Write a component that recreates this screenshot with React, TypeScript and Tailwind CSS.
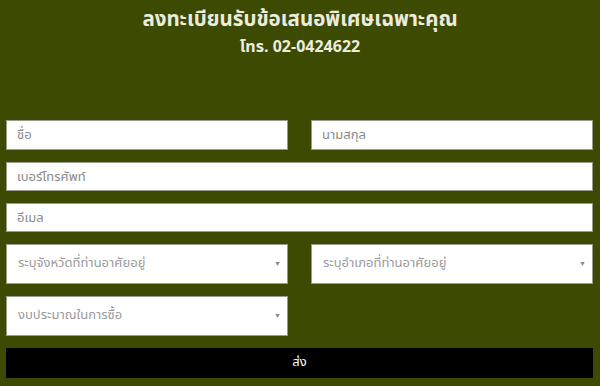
const font = { fontFamily: '"Noto Sans Thai", "Noto Sans", "Liberation Sans", sans-serif' };

function Field({ placeholder, tall }: { placeholder: string; tall?: boolean }) {
  return (
    <input
      placeholder={placeholder}
      className={
        (tall ? "h-[30px] " : "h-[29px] ") +
        "w-full border border-[#9a9a8c] bg-white px-[10px] text-[13px] text-[#333] outline-none placeholder:text-[#8a8a8a]"
      }
    />
  );
}

function Select({ label }: { label: string }) {
  return (
    <div className="flex h-[40px] w-full items-center justify-between border border-[#9a9a8c] bg-white pl-[11px] pr-[6px]">
      <span className="text-[13px] text-[#9a9a9a]">{label}</span>
      <span className="text-[7px] text-[#888]">▼</span>
    </div>
  );
}

export default function App() {
  return (
    <main className="h-[386px] w-[600px] bg-[#3d4a02]" style={font}>
      <div className="pt-[7px] text-center text-[#ecebdf]">
        <h1 className="text-[20.5px] font-bold leading-[26px]">ลงทะเบียนรับข้อเสนอพิเศษเฉพาะคุณ</h1>
        <p className="mt-[4px] text-[16px] font-bold leading-[20px]">โทร. 02-0424622</p>
      </div>

      <form className="mt-[63px] flex flex-col gap-[12px] pl-[6px] pr-[7px]">
        <div className="grid grid-cols-2 gap-[23px]">
          <Field placeholder="ชื่อ" tall />
          <Field placeholder="นามสกุล" tall />
        </div>
        <Field placeholder="เบอร์โทรศัพท์" />
        <Field placeholder="อีเมล" />
        <div className="grid grid-cols-2 gap-[23px]">
          <Select label="ระบุจังหวัดที่ท่านอาศัยอยู่" />
          <Select label="ระบุอำเภอที่ท่านอาศัยอยู่" />
        </div>
        <div className="grid grid-cols-2 gap-[23px]">
          <Select label="งบประมาณในการซื้อ" />
          <div />
        </div>
        <button type="button" className="h-[30px] w-full bg-black text-[13px] text-white">
          ส่ง
        </button>
      </form>
    </main>
  );
}
